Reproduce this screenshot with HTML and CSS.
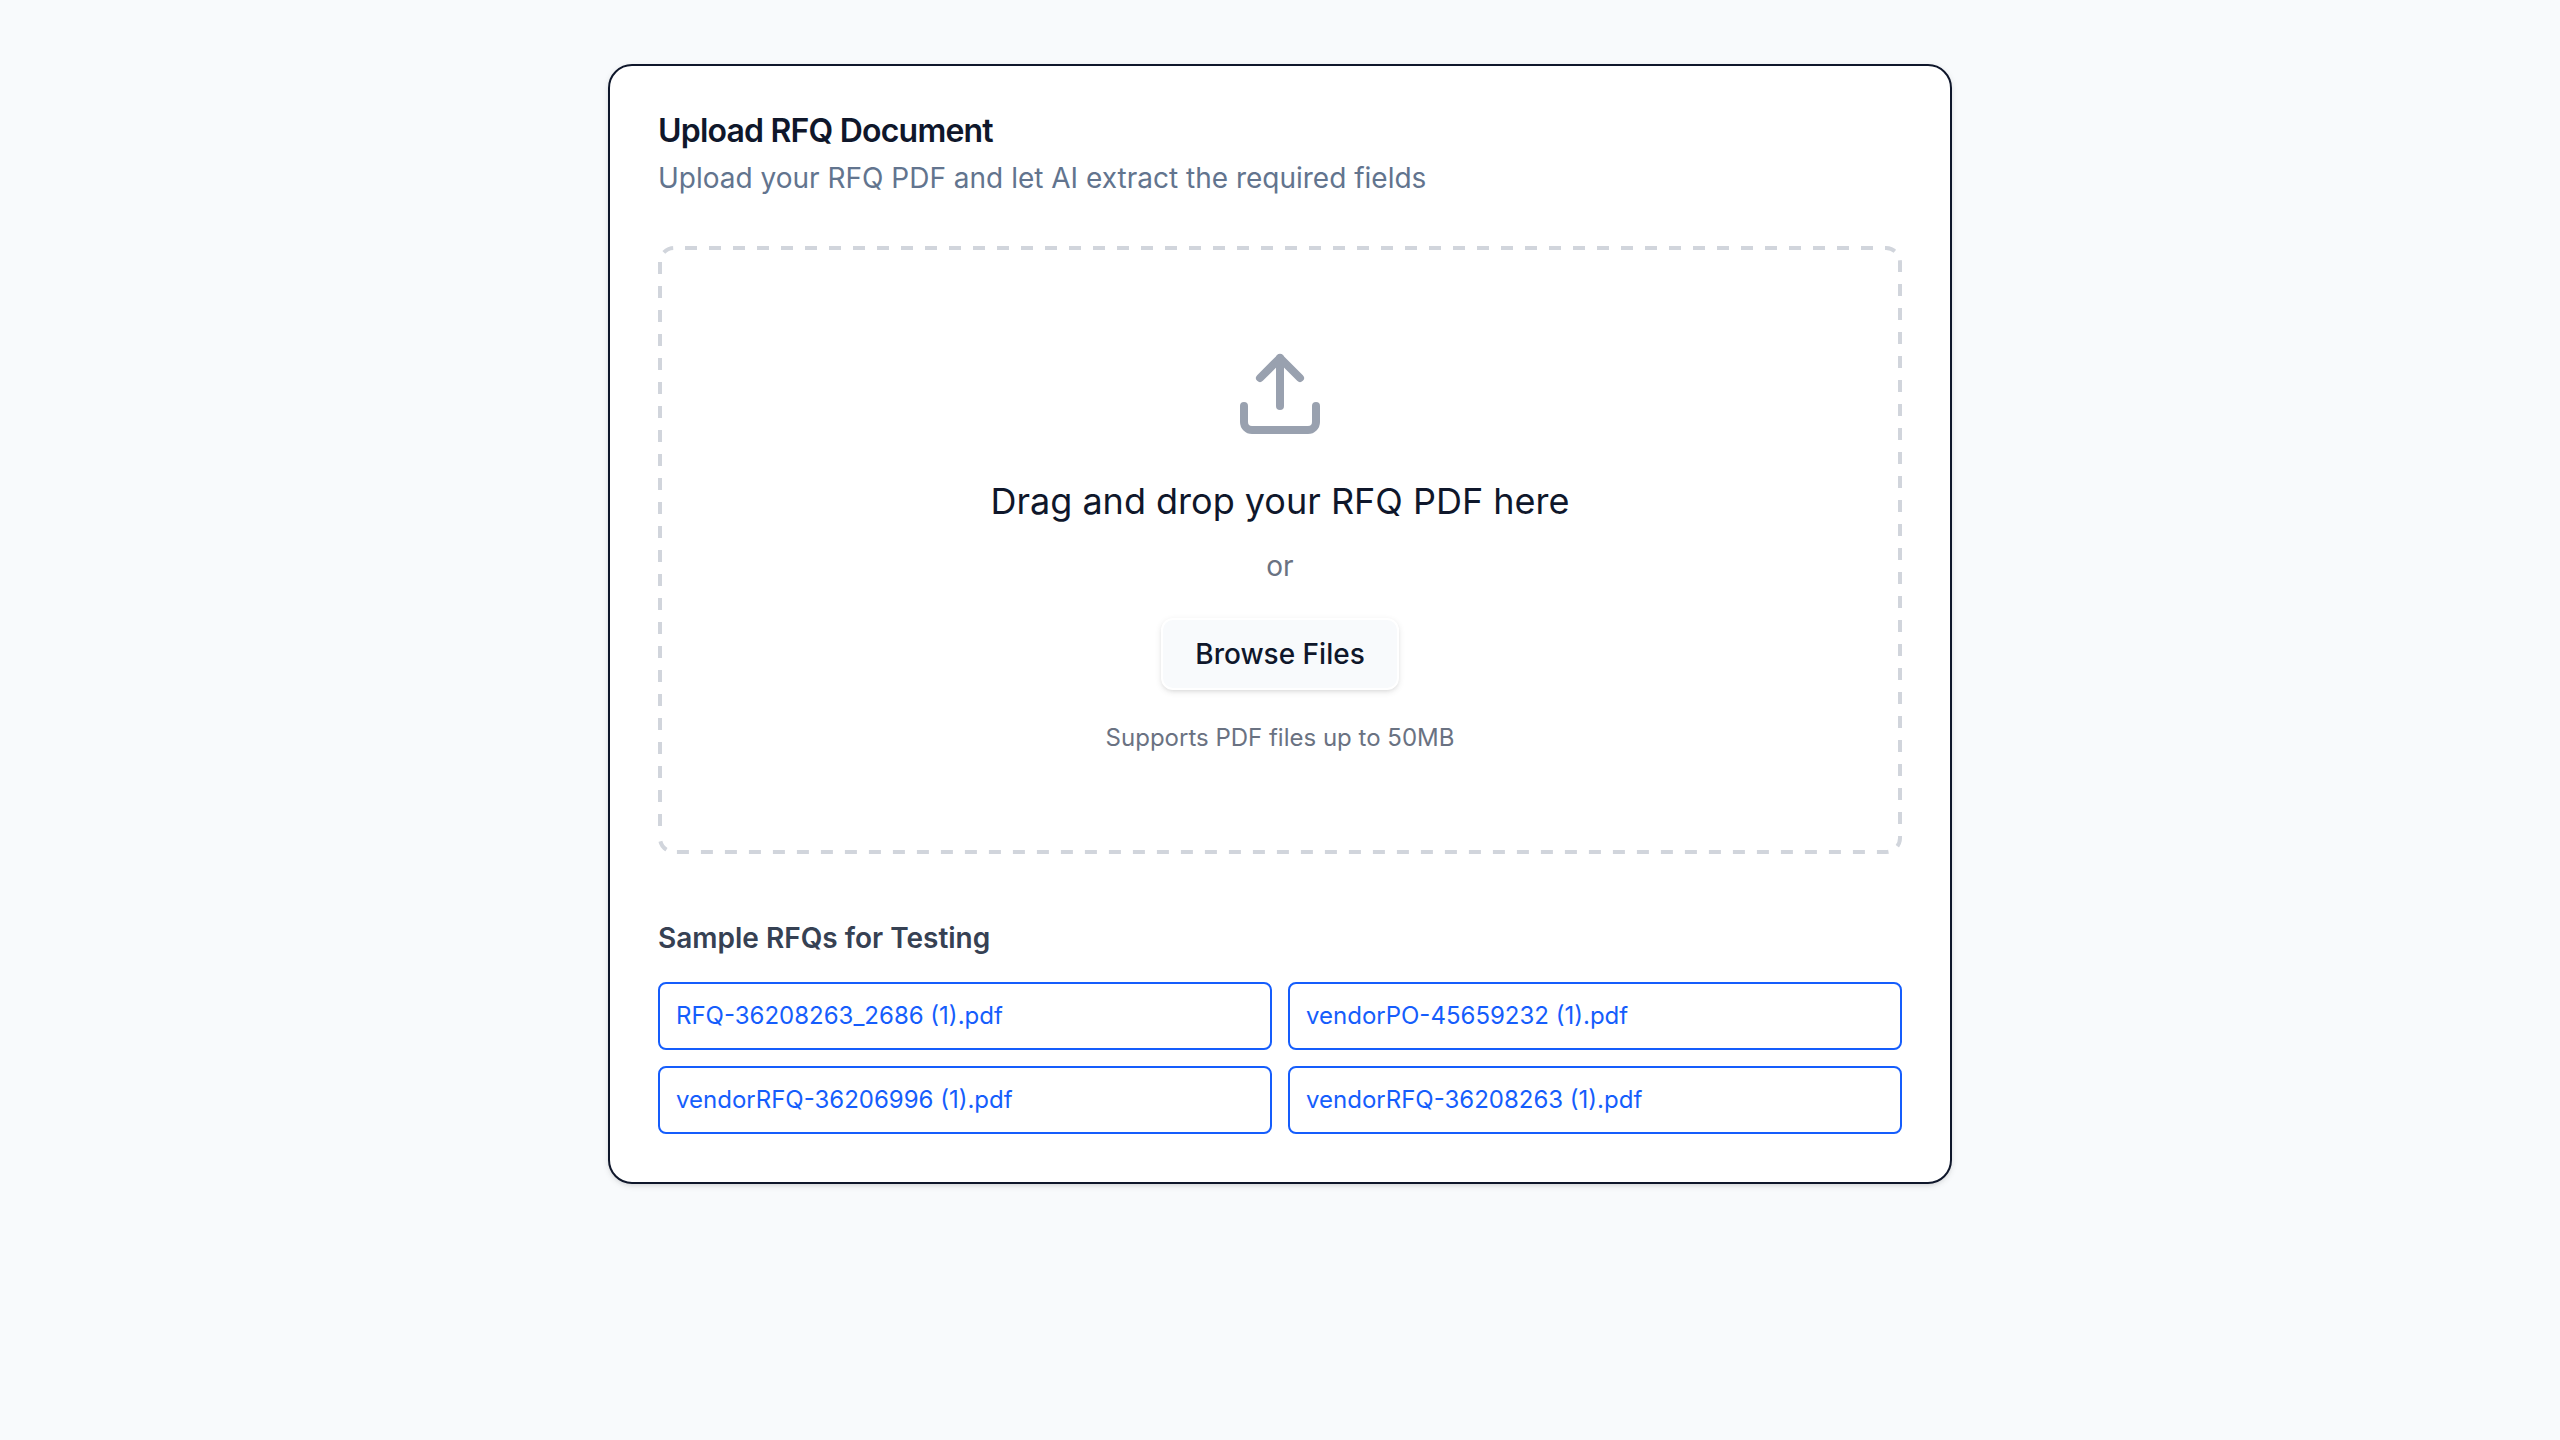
FILE: index.html
```html
<!DOCTYPE html>
<html lang="en">
<head>
<meta charset="utf-8">
<title>Upload RFQ Document</title>
<link rel="stylesheet" href="styles.css">
</head>
<body>
<main class="card">
  <header class="card-header">
    <h1 class="card-title">Upload RFQ Document</h1>
    <p class="card-description">Upload your RFQ PDF and let AI extract the required fields</p>
  </header>
  <section class="dropzone">
    <svg class="dropzone-outline" viewBox="0 0 1244 608" fill="none" aria-hidden="true">
      <path d="M0 592V16A16 16 0 0 1 16 0H1228A16 16 0 0 1 1244 16V592A16 16 0 0 1 1228 608H16A16 16 0 0 1 0 592"/>
    </svg>
    <svg class="upload-icon" viewBox="0 0 24 24" fill="none" stroke="currentColor" stroke-width="2" stroke-linecap="round" stroke-linejoin="round" aria-hidden="true">
      <path d="M21 15v4a2 2 0 0 1-2 2H5a2 2 0 0 1-2-2v-4"/>
      <polyline points="17 8 12 3 7 8"/>
      <line x1="12" x2="12" y1="3" y2="15"/>
    </svg>
    <p class="dropzone-title">Drag and drop your RFQ PDF here</p>
    <p class="dropzone-or">or</p>
    <button class="browse-button" type="button">Browse Files</button>
    <p class="dropzone-hint">Supports PDF files up to 50MB</p>
  </section>
  <section class="samples">
    <h2 class="samples-title">Sample RFQs for Testing</h2>
    <div class="samples-grid">
      <a class="sample">RFQ-36208263_2686 (1).pdf</a>
      <a class="sample">vendorPO-45659232 (1).pdf</a>
      <a class="sample">vendorRFQ-36206996 (1).pdf</a>
      <a class="sample">vendorRFQ-36208263 (1).pdf</a>
    </div>
  </section>
</main>
</body>
</html>
```
FILE: styles.css
```css
*, *::before, *::after {
  box-sizing: border-box;
}

body {
  margin: 0;
  min-height: 100vh;
  padding: 64px 0;
  background: #f8fafc;
  color: #0f172b;
  font-family: Inter, "Liberation Sans", sans-serif;
  font-optical-sizing: none;
}

h1, h2, p {
  margin: 0;
}

.card {
  width: 1344px;
  margin: 0 auto;
  padding: 48px;
  border: 2px solid #0f172b;
  border-radius: 24px;
  background: #fff;
  box-shadow: 0 2px 6px rgb(0 0 0 / 0.1), 0 2px 4px -2px rgb(0 0 0 / 0.1);
}

.card-header {
  display: flex;
  flex-direction: column;
  gap: 10px;
  margin-bottom: 48px;
}

.card-title {
  font-size: 32px;
  font-weight: 600;
  line-height: 34px;
  letter-spacing: -0.025em;
}

.card-description {
  color: #62748e;
  font-size: 28px;
  line-height: 40px;
}

.dropzone {
  position: relative;
  display: flex;
  flex-direction: column;
  align-items: center;
  padding: 100px;
  border-radius: 16px;
  text-align: center;
}

/* Dashed outline: the stroke runs along the outer edge, its outer half is clipped. */
.dropzone-outline {
  position: absolute;
  inset: 0;
  width: 100%;
  height: 100%;
  overflow: hidden;
  border-radius: 16px;
  stroke: #d1d5dc;
  stroke-width: 8;
  stroke-dasharray: 12 12;
  stroke-dashoffset: 12;
  pointer-events: none;
}

.upload-icon {
  width: 96px;
  height: 96px;
  margin-bottom: 32px;
  color: #99a1af;
}

.dropzone-title {
  margin-bottom: 18px;
  font-size: 36px;
  line-height: 54px;
}

.dropzone-or {
  margin-bottom: 32px;
  color: #6a7282;
  font-size: 28px;
  line-height: 40px;
}

.browse-button {
  height: 72px;
  margin-bottom: 32px;
  padding: 0 32px;
  border: 2px solid #fff;
  border-radius: 12px;
  background: #f8fafc;
  box-shadow: 0 2px 6px rgb(0 0 0 / 0.1), 0 2px 4px -2px rgb(0 0 0 / 0.1);
  color: #0f172b;
  font-family: inherit;
  font-size: 28px;
  font-weight: 500;
  line-height: 40px;
}

.dropzone-hint {
  color: #6a7282;
  font-size: 24px;
  line-height: 32px;
}

.samples {
  margin-top: 64px;
}

.samples-title {
  margin-bottom: 24px;
  color: #364153;
  font-size: 28px;
  font-weight: 600;
  line-height: 40px;
}

.samples-grid {
  display: grid;
  grid-template-columns: 1fr 1fr;
  gap: 16px;
}

.sample {
  padding: 16px;
  border: 2px solid #155dfc;
  border-radius: 8px;
  color: #155dfc;
  font-size: 24px;
  line-height: 32px;
}
```
